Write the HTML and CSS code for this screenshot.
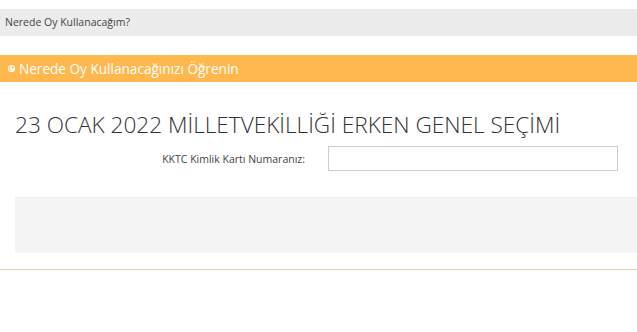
FILE: index.html
```html
<!DOCTYPE html>
<html lang="tr">

<head>
    <meta charset="UTF-8">
    <meta name="viewport" content="width=device-width, initial-scale=1.0">
    <title>Nerede Oy Kullanacağım?</title>
    <link rel="stylesheet" href="styles.css">
</head>

<body>

    <div class="breadcrumb">Nerede Oy Kullanacağım?</div>

    <div class="panel-heading">
        <svg class="globe" viewBox="0 0 16 16" width="7" height="7">
            <circle cx="8" cy="8" r="8" fill="#fff"/>
            <path d="M5 3 C7 4 6 6 4 7 C3 8 4 10 6 10 C7 11 6 13 7 14 C5 14 2 12 2 8 C2 6 3 4 5 3 Z M10 2 C11 4 13 4 14 6 C12 6 11 8 12 10 C11 9 9 8 9 6 C8 5 9 3 10 2 Z" fill="#ffb84d"/>
        </svg>
        Nerede Oy Kullanacağınızı Öğrenin
    </div>

    <div class="panel-body">
        <h1>23 OCAK 2022 MİLLETVEKİLLİĞİ ERKEN GENEL SEÇİMİ</h1>

        <div class="form-row">
            <label for="kimlik">KKTC Kimlik Kartı Numaranız:</label>
            <input type="text" id="kimlik">
        </div>

        <div class="result"></div>
    </div>

    <div class="divider"></div>

</body>

</html>
```

FILE: styles.css
```css
body {
    font-family: 'Open Sans', 'Noto Sans', sans-serif;
    margin: 0;
    background: #fff;
    color: #333;
}

.breadcrumb {
    margin-top: 9px;
    height: 27px;
    line-height: 27px;
    padding-left: 5px;
    background: #ececec;
    font-size: 10.5px;
    color: #444;
}

.panel-heading {
    margin-top: 19px;
    height: 27px;
    line-height: 27px;
    padding-left: 8px;
    background: #ffb84d;
    color: #fff;
    font-size: 13.6px;
    display: flex;
    align-items: center;
    gap: 4px;
}

.globe {
    display: block;
}

.panel-body {
    padding-left: 15px;
}

h1 {
    margin: 28px 0 0;
    font-size: 22.6px;
    font-weight: 300;
    line-height: 30px;
    color: #333;
}

.form-row {
    display: grid;
    grid-template-columns: 290px 290px;
    column-gap: 23px;
    align-items: center;
    margin-top: 6px;
}

.form-row label {
    text-align: right;
    font-size: 10.5px;
    color: #444;
}

.form-row input {
    height: 25px;
    box-sizing: border-box;
    border: 1px solid #ccc;
    padding: 0 6px;
    font-family: inherit;
    font-size: 12px;
    margin: 0;
}

.result {
    margin-top: 26px;
    height: 55px;
    background: #f4f4f4;
    border-top: 1px solid #ececec;
}

.divider {
    margin-top: 16px;
    border-top: 1px solid #efd3a0;
}
```
